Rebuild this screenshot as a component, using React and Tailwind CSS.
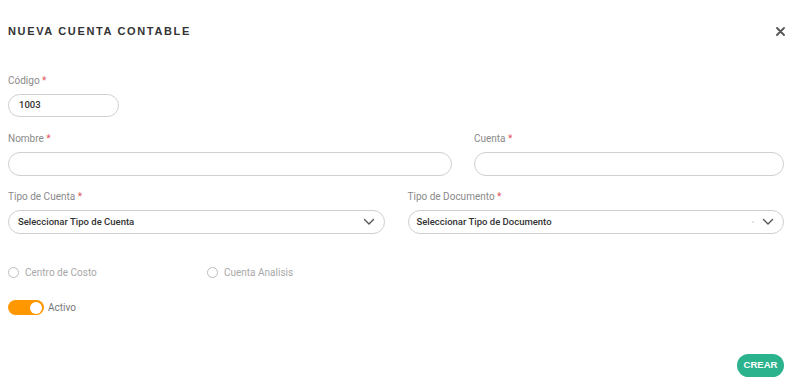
import React from "react";

const Label = ({ children }) => (
  <div className="text-[10px] leading-[12px] text-[#8a8a8a] mb-[7px]">
    {children} <span className="text-[#e0565b]">*</span>
  </div>
);

const Chevron = () => (
  <svg width="12" height="8" viewBox="0 0 12 8" fill="none" className="text-[#555]">
    <path d="M1.5 1.5 L6 6 L10.5 1.5" stroke="currentColor" strokeWidth="1.4" strokeLinecap="round" strokeLinejoin="round" />
  </svg>
);

export default function App() {
  return (
    <div className="w-[800px] h-[384px] bg-white relative overflow-hidden" style={{ fontFamily: "Roboto, 'Noto Sans', sans-serif" }}>
      <div className="flex items-center justify-between pl-[8px] pr-[16px] pt-[22px] h-[40px]">
        <h1 className="text-[11px] font-bold tracking-[0.15em] text-[#333]" style={{ fontFamily: "'Liberation Sans', Arial, sans-serif" }}>
          NUEVA CUENTA CONTABLE
        </h1>
        <svg width="9" height="9" viewBox="0 0 9 9" className="mr-[-1px]">
          <path d="M1 1 L8 8 M8 1 L1 8" stroke="#555" strokeWidth="1.8" strokeLinecap="round" />
        </svg>
      </div>

      <div className="pl-[8px] pr-[16px] pt-[35px]">
        <Label>Código</Label>
        <div className="w-[111px] h-[23px] rounded-full border border-[#cfcfcf] flex items-center px-[10px] text-[9.5px] font-medium text-[#333]">
          1003
        </div>

        <div className="flex gap-[22px] mt-[16px]">
          <div className="w-[444px]">
            <Label>Nombre</Label>
            <div className="h-[24px] rounded-full border border-[#cfcfcf]" />
          </div>
          <div className="flex-1">
            <Label>Cuenta</Label>
            <div className="h-[24px] rounded-full border border-[#cfcfcf]" />
          </div>
        </div>

        <div className="grid grid-cols-2 gap-[23px] mt-[15px]">
          <div>
            <Label>Tipo de Cuenta</Label>
            <div className="h-[24px] rounded-full border border-[#cfcfcf] flex items-center justify-between pl-[9px] pr-[9px] text-[9.5px] font-medium text-[#333]">
              <span>Seleccionar Tipo de Cuenta</span>
              <Chevron />
            </div>
          </div>
          <div>
            <Label>Tipo de Documento</Label>
            <div className="h-[24px] rounded-full border border-[#cfcfcf] flex items-center justify-between pl-[8px] pr-[9px] text-[9.5px] font-medium text-[#333]">
              <span>Seleccionar Tipo de Documento</span>
              <div className="flex items-center gap-[8px]">
                <span className="w-[2px] h-[2px] rounded-full bg-[#ddd]" />
                <Chevron />
              </div>
            </div>
          </div>
        </div>

        <div className="flex items-center mt-[32px] h-[12px]">
          <div className="flex items-center w-[199px]">
            <span className="w-[11px] h-[11px] rounded-full border border-[#bdbdbd]" />
            <span className="ml-[6px] text-[10px] text-[#a8a8a8]">Centro de Costo</span>
          </div>
          <div className="flex items-center">
            <span className="w-[11px] h-[11px] rounded-full border border-[#bdbdbd]" />
            <span className="ml-[6px] text-[10px] text-[#a8a8a8]">Cuenta Analisis</span>
          </div>
        </div>

        <div className="flex items-center mt-[22px]">
          <div className="w-[36px] h-[15px] rounded-full bg-[#ff9800] flex items-center justify-end pr-[2px]">
            <span className="w-[12px] h-[12px] rounded-full bg-white" />
          </div>
          <span className="ml-[4px] text-[10px] text-[#777]">Activo</span>
        </div>

        <div className="flex justify-end mt-[39px]">
          <button className="w-[47px] h-[23px] rounded-full bg-[#2bb38e] text-white text-[9.5px] font-bold" style={{ fontFamily: "'Liberation Sans', Arial, sans-serif" }}>
            CREAR
          </button>
        </div>
      </div>
    </div>
  );
}
